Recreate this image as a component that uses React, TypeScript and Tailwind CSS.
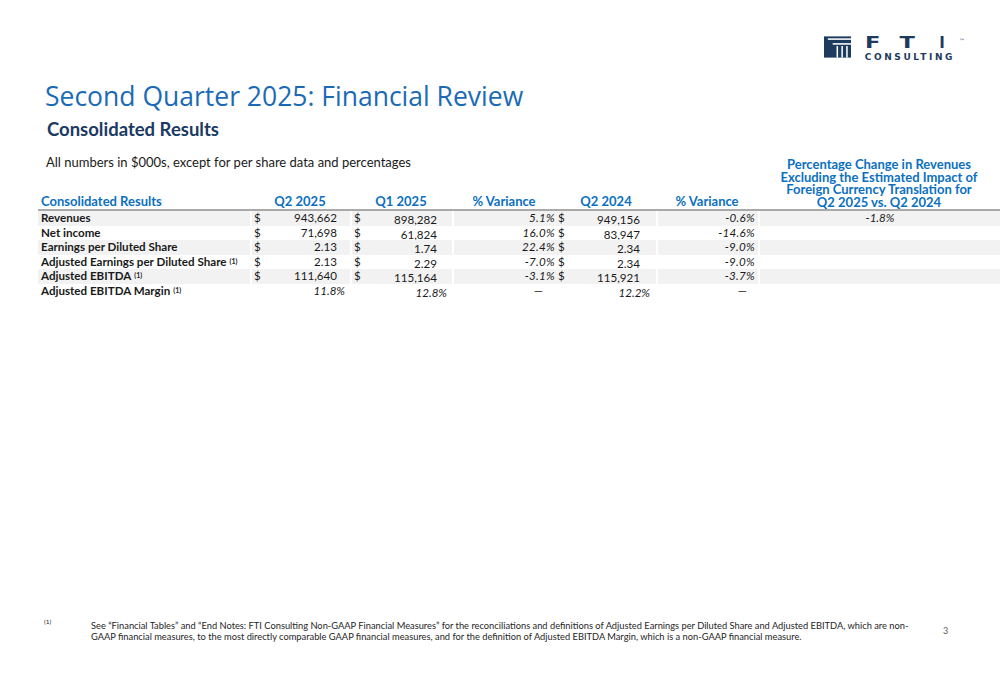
import React from 'react';

const FONT = "font-['Lato','Liberation_Sans',sans-serif]";

type Row = {
    label: string;
    note?: boolean;
    q225: string;
    q125: string;
    var1: string;
    q224: string;
    var2: string;
    fx?: string;
    dollar: boolean;
};

const ROWS: Row[] = [
    { label: 'Revenues', q225: '943,662', q125: '898,282', var1: '5.1%', q224: '949,156', var2: '-0.6%', fx: '-1.8%', dollar: true },
    { label: 'Net income', q225: '71,698', q125: '61,824', var1: '16.0%', q224: '83,947', var2: '-14.6%', dollar: true },
    { label: 'Earnings per Diluted Share', q225: '2.13', q125: '1.74', var1: '22.4%', q224: '2.34', var2: '-9.0%', dollar: true },
    { label: 'Adjusted Earnings per Diluted Share', note: true, q225: '2.13', q125: '2.29', var1: '-7.0%', q224: '2.34', var2: '-9.0%', dollar: true },
    { label: 'Adjusted EBITDA', note: true, q225: '111,640', q125: '115,164', var1: '-3.1%', q224: '115,921', var2: '-3.7%', dollar: true },
    { label: 'Adjusted EBITDA Margin', note: true, q225: '11.8%', q125: '12.8%', var1: '—', q224: '12.2%', var2: '—', dollar: false },
];

function Logo() {
    return (
        <div className="flex items-start gap-[14px] h-[24px]">
            <svg width="27" height="22" viewBox="0 0 28 22" className="-mt-[1px]">
                <rect x="0" y="0" width="28" height="22" fill="#1d3b5e" />
                <rect x="4" y="2" width="24" height="1.6" fill="#fff" />
                <rect x="9" y="7" width="19" height="1.6" fill="#fff" />
                <rect x="13" y="10" width="1.6" height="12" fill="#fff" />
                <rect x="18" y="10" width="1.6" height="12" fill="#fff" />
                <rect x="23" y="10" width="1.6" height="12" fill="#fff" />
            </svg>
            <div className="flex flex-col relative">
                <div className="flex justify-between w-[80px] h-[14px] items-start text-[#1d3b5e] font-['DejaVu_Sans',sans-serif] font-semibold text-[15px] leading-[13px]">
                    <span className="inline-block scale-x-150 origin-left">F</span>
                    <span className="inline-block scale-x-150 origin-center">T</span>
                    <span className="inline-block">I</span>
                </div>
                <span className="absolute -right-[10px] -top-[1px] text-[6px] text-[#1d3b5e] font-['DejaVu_Sans',sans-serif]">™</span>
                <div className="mt-[1px] text-[9px] leading-[10px] tracking-[2.6px] font-bold text-[#1d3b5e] font-['DejaVu_Sans',sans-serif]">
                    CONSULTING
                </div>
            </div>
        </div>
    );
}

function Note() {
    return <sup className="text-[7px] font-bold ml-[3px] relative -top-[1px]">(1)</sup>;
}

export default function App() {
    const cols = 'grid grid-cols-[212px_100px_102px_104px_100px_102px_1fr]';

    return (
        <div className={`w-[1000px] h-[685px] bg-white flex flex-col text-[#1a1a1a] ${FONT}`}>
            {/* Logo */}
            <div className="flex justify-end pt-[37px] pr-[45px]">
                <Logo />
            </div>

            {/* Titles */}
            <h1 className="mt-[19px] pl-[45px] font-['Open_Sans',sans-serif] text-[26.5px] leading-[32px] text-[#1a6bb5]">
                Second Quarter 2025: Financial Review
            </h1>
            <h2 className="mt-[7px] pl-[47px] text-[18.5px] leading-[21px] font-bold text-[#1b3a63]">
                Consolidated Results
            </h2>

            {/* Table */}
            <div className={`mt-[12px] pl-[38px] ${cols}`}>
                <div className="col-span-6 h-[43px] pt-[2px] pl-[8px] text-[13px] leading-[16px]">
                    All numbers in $000s, except for per share data and percentages
                </div>
                <div className="row-span-2 flex items-end justify-center pb-[1px]">
                    <div className="text-center text-[13px] leading-[12.5px] font-bold text-[#0b70c0]">
                        Percentage Change in Revenues
                        <br />
                        Excluding the Estimated Impact of
                        <br />
                        Foreign Currency Translation for
                        <br />
                        Q2 2025 vs. Q2 2024
                    </div>
                </div>

                {['Consolidated Results', 'Q2 2025', 'Q1 2025', '% Variance', 'Q2 2024', '% Variance'].map((h, i) => (
                    <div
                        key={i}
                        className={`text-[13px] leading-[13px] font-bold text-[#0b70c0] pb-[1px] ${i === 0 ? 'pl-[3px]' : 'text-center'}`}
                    >
                        {h}
                    </div>
                ))}

                <div className="col-span-7 h-[2px] bg-[#a9a9a9]" />

                {ROWS.map((r, i) => {
                    const shade = i % 2 === 0 ? 'bg-[#f2f2f2]' : 'bg-white';
                    const cell = `h-[14.5px] flex items-center text-[11.6px] leading-[14px] ${shade}`;
                    return (
                        <React.Fragment key={r.label}>
                            <div className={`${cell} pl-[3px] font-bold`}>
                                {r.label}
                                {r.note && <Note />}
                            </div>
                            {r.dollar ? (
                                <>
                                    <div className={`${cell} border-l-2 border-white justify-between pl-[2px] pr-[13px]`}>
                                        <span>$</span>
                                        <span>{r.q225}</span>
                                    </div>
                                    <div className={`${cell} border-l-2 border-white justify-between pl-[2px] pr-[15px]`}>
                                        <span>$</span>
                                        <span className="pt-[4px]">{r.q125}</span>
                                    </div>
                                    <div className={`${cell} border-l-2 border-white justify-end pr-[1px] italic tracking-[0.3px]`}>
                                        {r.var1}
                                    </div>
                                    <div className={`${cell} justify-between pl-[2px] pr-[16px]`}>
                                        <span>$</span>
                                        <span className="pt-[4px]">{r.q224}</span>
                                    </div>
                                </>
                            ) : (
                                <>
                                    <div className={`${cell} border-l-2 border-white justify-end pr-[5px] italic`}>
                                        {r.q225}
                                    </div>
                                    <div className={`${cell} border-l-2 border-white justify-end pr-[5px] italic`}>
                                        <span className="pt-[4px]">{r.q125}</span>
                                    </div>
                                    <div className={`${cell} border-l-2 border-white justify-end pr-[13px]`}>
                                        {r.var1}
                                    </div>
                                    <div className={`${cell} justify-end pr-[6px] italic`}>
                                        <span className="pt-[4px]">{r.q224}</span>
                                    </div>
                                </>
                            )}
                            <div
                                className={`${cell} border-l-2 border-white justify-end ${
                                    r.dollar ? 'pr-[3px] italic tracking-[0.3px]' : 'pr-[11px]'
                                }`}
                            >
                                {r.var2}
                            </div>
                            <div className={`${cell} border-l-2 border-white justify-center italic`}>{r.fx}</div>
                        </React.Fragment>
                    );
                })}
            </div>

            {/* Footnote */}
            <div className="mt-auto mb-[43px] flex items-start">
                <span className="w-[91px] pl-[44px] text-[6.5px] leading-[8px] -mt-[2px]">(1)</span>
                <p className="w-[830px] whitespace-nowrap text-[9.3px] leading-[11px] text-[#262626]">
                    See “Financial Tables” and “End Notes: FTI Consulting Non-GAAP Financial Measures” for the
                    reconciliations and definitions of Adjusted Earnings per Diluted Share and Adjusted EBITDA, which
                    are non-
                    <br />
                    GAAP financial measures, to the most directly comparable GAAP financial measures, and for the
                    definition of Adjusted EBITDA Margin, which is a non-GAAP financial measure.
                </p>
                <span className="ml-[22px] mt-[6px] text-[9px] leading-[10px] text-[#595959]">3</span>
            </div>
        </div>
    );
}
